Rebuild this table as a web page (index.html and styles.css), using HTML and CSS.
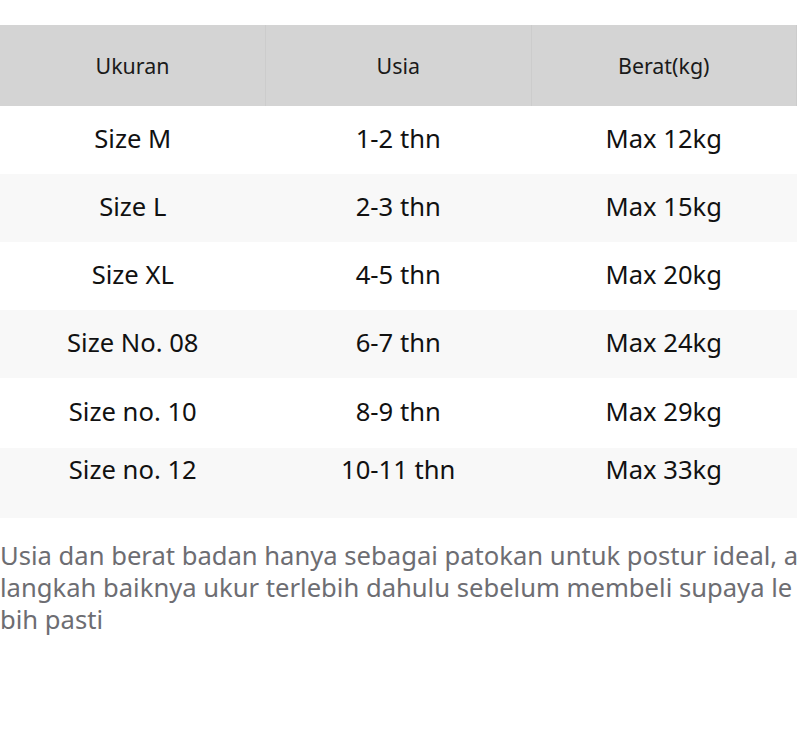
FILE: index.html
```html
<!DOCTYPE html>
<html lang="id">
<head>
<meta charset="utf-8">
<link rel="stylesheet" href="styles.css">
</head>
<body>
<div class="page">
  <table class="size-table">
    <thead>
      <tr>
        <th>Ukuran</th>
        <th>Usia</th>
        <th>Berat(kg)</th>
      </tr>
    </thead>
    <tbody>
      <tr><td>Size M</td><td>1-2 thn</td><td>Max 12kg</td></tr>
      <tr class="alt"><td>Size L</td><td>2-3 thn</td><td>Max 15kg</td></tr>
      <tr><td>Size XL</td><td>4-5 thn</td><td>Max 20kg</td></tr>
      <tr class="alt"><td>Size No. 08</td><td>6-7 thn</td><td>Max 24kg</td></tr>
      <tr class="tall"><td>Size no. 10</td><td>8-9 thn</td><td>Max 29kg</td></tr>
      <tr class="alt last"><td>Size no. 12</td><td>10-11 thn</td><td>Max 33kg</td></tr>
    </tbody>
  </table>
  <p class="note">Usia dan berat badan hanya sebagai patokan untuk postur ideal, a langkah baiknya ukur terlebih dahulu sebelum membeli supaya le bih pasti</p>
</div>
</body>
</html>
```

FILE: styles.css
```css
html, body {
  margin: 0;
  padding: 0;
  background: #ffffff;
}

body {
  font-family: "Noto Sans", "Open Sans", sans-serif;
  color: #111111;
}

.page {
  padding-top: 25px;
  width: 797px;
}

.size-table {
  width: 100%;
  border-collapse: collapse;
  table-layout: fixed;
}

.size-table th {
  background: #d4d4d4;
  font-weight: 400;
  font-size: 21.4px;
  height: 81px;
  padding: 0;
  text-align: center;
  border-right: 1px solid #cccccc;
  color: #1a1a1a;
}

.size-table td {
  font-size: 25.6px;
  height: 68px;
  padding: 0 0 4px;
  text-align: center;
  box-sizing: border-box;
}

.size-table tr.tall td {
  height: 70px;
}

.size-table tr.alt td {
  background: #f8f8f8;
}

.size-table tr.last td {
  height: 70px;
  vertical-align: top;
  padding-top: 4px;
}

.note {
  margin: 22px 0 0;
  font-size: 25.6px;
  line-height: 32px;
  color: #6d6d72;
  width: 800px;
  word-break: break-all;
}
```
